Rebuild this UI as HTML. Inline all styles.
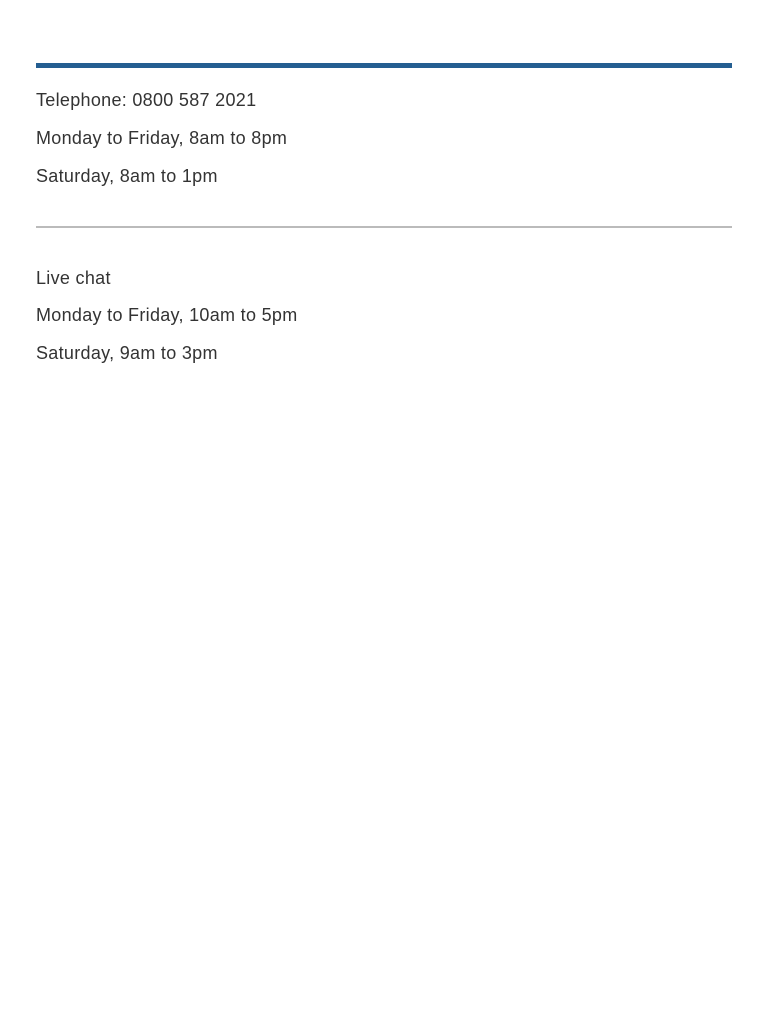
<!DOCTYPE html>
<html><head><meta charset="utf-8"><style>
body{margin:0;background:#fff;font-family:"Liberation Sans",sans-serif;color:#333;font-size:18px;letter-spacing:0.3px;}
.bar{position:absolute;left:36px;top:63px;width:696px;height:5px;background:#245e91;}
.hr{position:absolute;left:36px;top:226px;width:696px;height:2px;background:#bbb;}
.t{position:absolute;left:36px;line-height:20px;white-space:nowrap;}
</style></head><body>
<div class="bar"></div>
<div class="t" style="top:90px">Telephone: 0800 587 2021</div>
<div class="t" style="top:128px">Monday to Friday, 8am to 8pm</div>
<div class="t" style="top:166px">Saturday, 8am to 1pm</div>
<div class="hr"></div>
<div class="t" style="top:268px">Live chat</div>
<div class="t" style="top:305px">Monday to Friday, 10am to 5pm</div>
<div class="t" style="top:343px">Saturday, 9am to 3pm</div>
</body></html>
